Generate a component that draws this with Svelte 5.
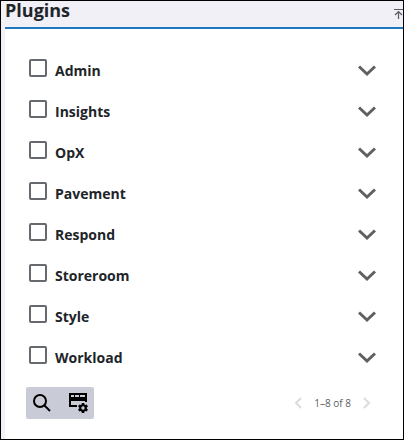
<script>
	let plugins = $state([
		{ name: 'Admin', checked: false },
		{ name: 'Insights', checked: false },
		{ name: 'OpX', checked: false },
		{ name: 'Pavement', checked: false },
		{ name: 'Respond', checked: false },
		{ name: 'Storeroom', checked: false },
		{ name: 'Style', checked: false },
		{ name: 'Workload', checked: false }
	]);

	const range = $derived(`1–${plugins.length} of ${plugins.length}`);
</script>

<div class="frame">
	<section class="panel">
		<header>
			<h1>Plugins</h1>
			<button class="collapse" aria-label="Collapse panel">
				<svg width="9" height="12" viewBox="0 0 9 12" fill="none" stroke="#5b5b66">
					<path d="M0 1.500h9" />
					<path d="M4.500 11V4M1 7l3.500-3.500L8 7" stroke-width="1.200" />
				</svg>
			</button>
		</header>

		<ul>
			{#each plugins as plugin}
				<li>
					<label>
						<input type="checkbox" bind:checked={plugin.checked} />
						<span>{plugin.name}</span>
					</label>
					<button class="expand" aria-label="Expand {plugin.name}">
						<svg width="18" height="12" viewBox="0 0 18 12">
							<path d="M1 1.500L9 9l8-7.500" fill="none" stroke="#5f6063" stroke-width="3" />
						</svg>
					</button>
				</li>
			{/each}
		</ul>

		<footer>
			<div class="tools">
				<button aria-label="Search">
					<svg width="20" height="20" viewBox="0 0 20 20" fill="none" stroke="#000" stroke-width="2">
						<circle cx="8" cy="8" r="6" />
						<path d="M12.500 12.500l5.500 5.500" />
					</svg>
				</button>
				<button aria-label="Column settings">
					<svg width="20" height="20" viewBox="0 0 20 20">
						<path
							fill="#000"
							fill-rule="evenodd"
							d="M1 0h18v9h-2V8H3v4h6v2H1zM3 2v2h3V2zM7 2v2h4V2zM12 2v2h5V2z"
						/>
						<g transform="translate(15 15)">
							<circle r="2.700" fill="none" stroke="#000" stroke-width="2" />
							{#each [0, 60, 120, 180, 240, 300] as angle}
								<path d="M-1.200-5h2.400l.3 2.200h-3z" transform="rotate({angle})" />
							{/each}
						</g>
					</svg>
				</button>
			</div>

			<nav>
				<button aria-label="Previous page" disabled>
					<svg width="8" height="12" viewBox="0 0 8 12" fill="none" stroke="#dcdcde" stroke-width="2">
						<path d="M7 1L2 6l5 5" />
					</svg>
				</button>
				<span>{range}</span>
				<button aria-label="Next page" disabled>
					<svg width="8" height="12" viewBox="0 0 8 12" fill="none" stroke="#dcdcde" stroke-width="2">
						<path d="M1 1l5 5-5 5" />
					</svg>
				</button>
			</nav>
		</footer>
	</section>
</div>

<style>
	:global(body) {
		margin: 0;
	}

	.frame {
		box-sizing: border-box;
		min-height: 100vh;
		display: flex;
		border: 1px solid #000;
		background: #f3f0f6;
		font-family: 'Open Sans', 'Noto Sans', sans-serif;
		color: #212529;
	}

	.panel {
		flex: 1;
		min-width: 0;
		margin-left: 4px;
		background: #fff;
	}

	header {
		display: flex;
		align-items: center;
		justify-content: space-between;
		height: 26px;
		border-bottom: 2px solid #1f78bd;
		background: #f1f0f6;
	}

	h1 {
		margin: 0;
		padding-bottom: 8px;
		font-size: 18px;
		line-height: 18px;
		font-weight: 700;
	}

	button {
		display: flex;
		align-items: center;
		justify-content: center;
		padding: 0;
		border: none;
		background: none;
		cursor: pointer;
	}

	ul {
		list-style: none;
		margin: 0;
		padding: 21px 24px 0;
	}

	li {
		display: flex;
		align-items: center;
		justify-content: space-between;
		height: 41px;
	}

	label {
		display: flex;
		align-items: flex-start;
		gap: 8px;
		font-size: 14px;
		line-height: 24px;
		font-weight: 700;
		cursor: pointer;
	}

	input {
		appearance: none;
		box-sizing: border-box;
		width: 18px;
		height: 18px;
		margin: 0;
		border: 2px solid #66696d;
		border-radius: 2px;
		background: #fff;
	}

	input:checked {
		background: #1f78bd;
		border-color: #1f78bd;
	}

	.expand {
		width: 24px;
		height: 24px;
	}

	footer {
		display: flex;
		align-items: center;
		justify-content: space-between;
		padding: 9px 32px 16px 21px;
	}

	.tools {
		display: flex;
		justify-content: space-between;
		width: 68px;
		border-radius: 2px;
		background: #c9cbd6;
	}

	.tools button {
		width: 32px;
		height: 32px;
	}

	nav {
		display: flex;
		align-items: center;
		gap: 12px;
		font-size: 10px;
		line-height: 16px;
		color: #5c5f63;
	}

	nav button {
		cursor: default;
	}
</style>
